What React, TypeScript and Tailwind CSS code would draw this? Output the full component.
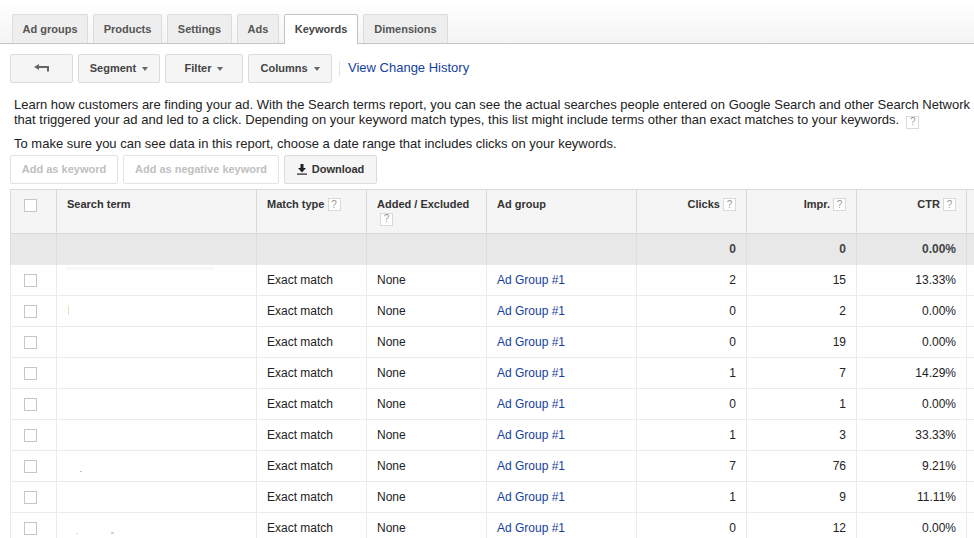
const tabs = [
  { label: 'Ad groups', width: 'w-[76px]' },
  { label: 'Products', width: 'w-[69px]' },
  { label: 'Settings', width: 'w-[65px]' },
  { label: 'Ads', width: 'w-[42px]' },
  { label: 'Keywords', width: 'w-[74px]', active: true },
  { label: 'Dimensions', width: 'w-[85px]' },
];

const rows = [
  { clicks: 2, impr: 15, ctr: '13.33%' },
  { clicks: 0, impr: 2, ctr: '0.00%' },
  { clicks: 0, impr: 19, ctr: '0.00%' },
  { clicks: 1, impr: 7, ctr: '14.29%' },
  { clicks: 0, impr: 1, ctr: '0.00%' },
  { clicks: 1, impr: 3, ctr: '33.33%' },
  { clicks: 7, impr: 76, ctr: '9.21%' },
  { clicks: 1, impr: 9, ctr: '11.11%' },
  { clicks: 0, impr: 12, ctr: '0.00%' },
];

// faint leftovers of the blanked out search terms
const marks: Record<number, string[]> = {
  0: ['top-[2px] left-[9px] h-[3px] w-[147px] bg-[#f8f8f8]'],
  1: ['top-[10px] left-[11px] h-[9px] w-px bg-[#efdcae]'],
  6: ['top-[20px] left-[23px] h-px w-[2px] bg-[#c8c8c8]'],
  8: ['top-[20px] left-[19px] h-px w-[2px] bg-[#dddddd]', 'top-[19px] left-[54px] h-[2px] w-[3px] bg-[#d4d4d4]'],
};

const Help = () => (
  <span className="inline-flex h-[13px] w-[13px] items-center justify-center border border-[#d9d9d9] bg-white text-[10px] leading-none font-normal text-[#999]">
    ?
  </span>
);

const Caret = () => <span className="ml-[6px] inline-block border-x-[3.5px] border-t-[4px] border-x-transparent border-t-[#666] align-middle" />;

const Checkbox = () => <span className="block h-[13px] w-[13px] border border-[#c6c6c6] bg-white" />;

const ToolButton = ({ label, width }: { label: string; width: string }) => (
  <button className={`${width} h-[29px] rounded-[2px] border border-[#dcdcdc] bg-[#f5f5f5] text-[11px] font-bold text-[#444]`}>
    {label}
    <Caret />
  </button>
);

const App = () => {
  return (
    <div className="h-[538px] w-[974px] overflow-hidden bg-white font-['Liberation_Sans',Arial,sans-serif] text-[13px] leading-[15px] text-[#222]">
      <div className="flex h-[44px] items-end gap-[5px] border-b border-[#c4c4c4] bg-gradient-to-b from-white to-[#f4f4f4] pl-[12px]">
        {tabs.map((tab) => (
          <div
            key={tab.label}
            className={`${tab.width} -mb-px flex items-center justify-center rounded-t-[2px] border border-b-0 text-[11px] font-bold ${
              tab.active ? 'h-[30px] border-[#c4c4c4] bg-white pb-px text-[#444]' : 'mb-0 h-[29px] border-[#dcdcdc] bg-[#eeeeee] text-[#555]'
            }`}
          >
            {tab.label}
          </div>
        ))}
      </div>

      <div className="mt-[10px] flex items-center pl-[10px]">
        <button className="flex h-[29px] w-[63px] items-center justify-center rounded-[2px] border border-[#dcdcdc] bg-[#f5f5f5]">
          <svg width="15" height="8" viewBox="0 0 15 8" className="-mt-[2px]">
            <path d="M0 3 L5 0 V2 H15 V7.5 H13 V4 H5 V6 Z" fill="#666" />
          </svg>
        </button>
        <div className="ml-[5px] flex gap-[5px]">
          <ToolButton label="Segment" width="w-[82px]" />
          <ToolButton label="Filter" width="w-[78px]" />
          <ToolButton label="Columns" width="w-[84px]" />
        </div>
        <span className="mr-[8px] ml-[7px] h-[15px] w-px bg-[#e4e4e4]" />
        <a className="mb-[2px] text-[13px] text-[#15419e]">View Change History</a>
      </div>

      <p className="mt-[14px] pl-[14px] whitespace-nowrap">
        Learn how customers are finding your ad. With the Search terms report, you can see the actual searches people entered on Google Search and other Search Network
        <br />
        that triggered your ad and led to a click. Depending on your keyword match types, this list might include terms other than exact matches to your keywords.
        <span className="ml-[7px] inline-block align-[-1px]">
          <Help />
        </span>
      </p>
      <p className="mt-[7px] pl-[14px] whitespace-nowrap">To make sure you can see data in this report, choose a date range that includes clicks on your keywords.</p>

      <div className="mt-[4px] flex gap-[5px] pl-[10px]">
        <button className="h-[29px] w-[108px] rounded-[2px] border border-[#e2e2e2] bg-white text-[11px] font-bold text-[#c0c0c0]">Add as keyword</button>
        <button className="h-[29px] w-[156px] rounded-[2px] border border-[#e2e2e2] bg-white text-[11px] font-bold text-[#c0c0c0]">Add as negative keyword</button>
        <button className="flex h-[29px] w-[93px] items-center justify-center gap-[5px] rounded-[2px] border border-[#dcdcdc] bg-[#f5f5f5] text-[11px] font-bold text-[#333]">
          <svg width="10" height="11" viewBox="0 0 10 11">
            <path d="M3.5 0 H6.5 V4 H9 L5 8.5 L1 4 H3.5 Z" fill="#222" />
            <rect x="0" y="9.5" width="10" height="1.2" fill="#222" />
          </svg>
          Download
        </button>
      </div>

      <table className="mt-[5px] ml-[10px] w-[964px] table-fixed border-collapse text-[12px]">
        <colgroup>
          <col className="w-[46px]" />
          <col className="w-[200px]" />
          <col className="w-[110px]" />
          <col className="w-[120px]" />
          <col className="w-[150px]" />
          <col className="w-[110px]" />
          <col className="w-[110px]" />
          <col className="w-[110px]" />
          <col className="w-[8px]" />
        </colgroup>
        <thead>
          <tr className="h-[44px] border-y border-[#d9d9d9] bg-[#f5f5f5] align-top text-[11px] font-bold text-[#333]">
            <th className="border-x border-[#d9d9d9] pt-[9px] pl-[13px] text-left">
              <Checkbox />
            </th>
            <th className="border-r border-[#d9d9d9] pt-[7px] pl-[10px] text-left">Search term</th>
            <th className="border-r border-[#d9d9d9] pt-[7px] pl-[10px] text-left">
              Match type <Help />
            </th>
            <th className="border-r border-[#d9d9d9] pt-[7px] pl-[10px] text-left">
              Added / Excluded
              <div className="mt-[1px] ml-[3px] flex">
                <Help />
              </div>
            </th>
            <th className="border-r border-[#d9d9d9] pt-[7px] pl-[10px] text-left">Ad group</th>
            <th className="border-r border-[#d9d9d9] pt-[7px] pr-[10px] text-right">
              Clicks <Help />
            </th>
            <th className="border-r border-[#d9d9d9] pt-[7px] pr-[10px] text-right">
              Impr. <Help />
            </th>
            <th className="border-r border-[#d9d9d9] pt-[7px] pr-[10px] text-right">
              CTR <Help />
            </th>
            <th />
          </tr>
        </thead>
        <tbody>
          <tr className="h-[31px] border-b border-[#ebebeb] bg-[#e8e8e8] text-right font-bold text-[#444]">
            <td className="border-x border-[#dedede]" />
            <td className="border-r border-[#dedede]" />
            <td className="border-r border-[#dedede]" />
            <td className="border-r border-[#dedede]" />
            <td className="border-r border-[#dedede]" />
            <td className="border-r border-[#dedede] pt-[2px] pr-[10px]">0</td>
            <td className="border-r border-[#dedede] pt-[2px] pr-[10px]">0</td>
            <td className="border-r border-[#dedede] pt-[2px] pr-[10px]">0.00%</td>
            <td />
          </tr>
          {rows.map((row, i) => (
            <tr key={i} className="h-[31px] border-b border-[#ebebeb]">
              <td className="border-x border-[#ebebeb] pt-[2px] pl-[13px]">
                <Checkbox />
              </td>
              <td className="relative border-r border-[#ebebeb]">
                {marks[i]?.map((mark) => <span key={mark} className={`absolute ${mark}`} />)}
              </td>
              <td className="border-r border-[#ebebeb] pt-[2px] pl-[10px]">Exact match</td>
              <td className="border-r border-[#ebebeb] pt-[2px] pl-[10px]">None</td>
              <td className="border-r border-[#ebebeb] pt-[2px] pl-[10px] text-[#15419e]">Ad Group #1</td>
              <td className="border-r border-[#ebebeb] pt-[2px] pr-[10px] text-right">{row.clicks}</td>
              <td className="border-r border-[#ebebeb] pt-[2px] pr-[10px] text-right">{row.impr}</td>
              <td className="border-r border-[#ebebeb] pt-[2px] pr-[10px] text-right">{row.ctr}</td>
              <td />
            </tr>
          ))}
        </tbody>
      </table>
    </div>
  );
};

export default App;
